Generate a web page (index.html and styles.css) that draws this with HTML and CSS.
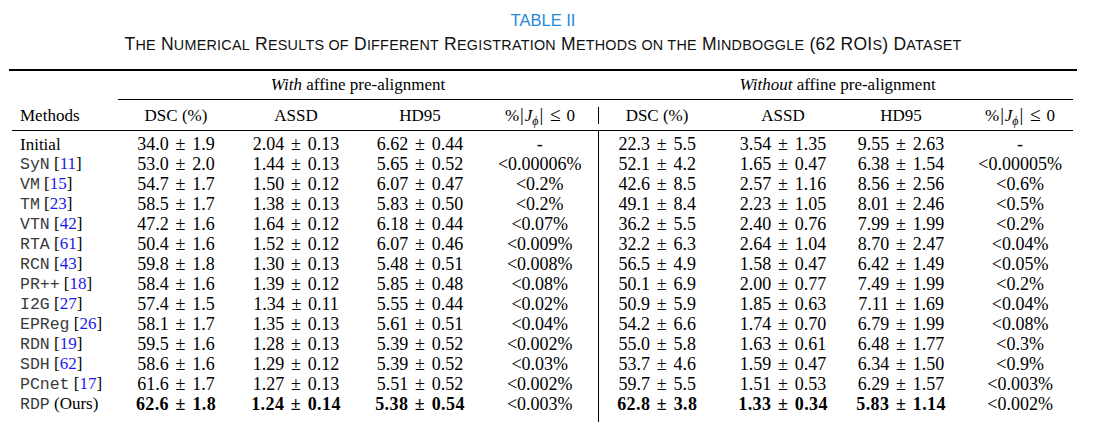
FILE: index.html
```html
<!DOCTYPE html>
<html lang="en">
<head>
<meta charset="utf-8">
<title>Table II</title>
<link rel="stylesheet" href="styles.css">
</head>
<body>
<div class="page">
  <div class="caption">
    <div class="tno">TABLE II</div>
    <div class="ttl">T<span class="sc">he</span> N<span class="sc">umerical</span> R<span class="sc">esults of</span> D<span class="sc">ifferent</span> R<span class="sc">egistration</span> M<span class="sc">ethods on the</span> M<span class="sc">indboggle</span> (62 ROI<span class="sc">s</span>) D<span class="sc">ataset</span></div>
  </div>
  <div class="rule-top"></div>
  <table class="res">
    <colgroup>
      <col class="c-m"><col class="c-dsc"><col class="c-assd"><col class="c-hd"><col class="c-j">
      <col class="c-dsc2"><col class="c-assd2"><col class="c-hd2"><col class="c-j2">
    </colgroup>
    <thead>
      <tr class="grp"><th></th><th colspan="4"><i>With</i> affine pre-alignment</th><th colspan="4"><i>Without</i> affine pre-alignment</th></tr>
      <tr class="rulerow"><td></td><td colspan="8"><div class="cmid"></div></td></tr>
      <tr class="hdr">
        <th class="m">Methods</th><th>DSC (%)</th><th>ASSD</th><th>HD95</th>
        <th>%<span class="bar">|</span><i>J</i><sub>ϕ</sub><span class="bar">|</span><span class="le">≤</span>0</th>
        <th class="sep">DSC (%)</th><th>ASSD</th><th>HD95</th>
        <th>%<span class="bar">|</span><i>J</i><sub>ϕ</sub><span class="bar">|</span><span class="le">≤</span>0</th>
      </tr>
      <tr class="rulerow"><td colspan="9"><div class="mid"></div></td></tr>
    </thead>
    <tbody>
      <tr class="spacer"><td colspan="5"></td><td class="sep"></td><td colspan="3"></td></tr>
      <tr><td class="m">Initial</td><td>34.0<span class="pm">±</span>1.9</td><td>2.04<span class="pm">±</span>0.13</td><td>6.62<span class="pm">±</span>0.44</td><td>-</td><td class="sep">22.3<span class="pm">±</span>5.5</td><td>3.54<span class="pm">±</span>1.35</td><td>9.55<span class="pm">±</span>2.63</td><td>-</td></tr>
      <tr><td class="m"><span class="tt">SyN</span> [<span class="ref">11</span>]</td><td>53.0<span class="pm">±</span>2.0</td><td>1.44<span class="pm">±</span>0.13</td><td>5.65<span class="pm">±</span>0.52</td><td>&lt;0.00006%</td><td class="sep">52.1<span class="pm">±</span>4.2</td><td>1.65<span class="pm">±</span>0.47</td><td>6.38<span class="pm">±</span>1.54</td><td>&lt;0.00005%</td></tr>
      <tr><td class="m"><span class="tt">VM</span> [<span class="ref">15</span>]</td><td>54.7<span class="pm">±</span>1.7</td><td>1.50<span class="pm">±</span>0.12</td><td>6.07<span class="pm">±</span>0.47</td><td>&lt;0.2%</td><td class="sep">42.6<span class="pm">±</span>8.5</td><td>2.57<span class="pm">±</span>1.16</td><td>8.56<span class="pm">±</span>2.56</td><td>&lt;0.6%</td></tr>
      <tr><td class="m"><span class="tt">TM</span> [<span class="ref">23</span>]</td><td>58.5<span class="pm">±</span>1.7</td><td>1.38<span class="pm">±</span>0.13</td><td>5.83<span class="pm">±</span>0.50</td><td>&lt;0.2%</td><td class="sep">49.1<span class="pm">±</span>8.4</td><td>2.23<span class="pm">±</span>1.05</td><td>8.01<span class="pm">±</span>2.46</td><td>&lt;0.5%</td></tr>
      <tr><td class="m"><span class="tt">VTN</span> [<span class="ref">42</span>]</td><td>47.2<span class="pm">±</span>1.6</td><td>1.64<span class="pm">±</span>0.12</td><td>6.18<span class="pm">±</span>0.44</td><td>&lt;0.07%</td><td class="sep">36.2<span class="pm">±</span>5.5</td><td>2.40<span class="pm">±</span>0.76</td><td>7.99<span class="pm">±</span>1.99</td><td>&lt;0.2%</td></tr>
      <tr><td class="m"><span class="tt">RTA</span> [<span class="ref">61</span>]</td><td>50.4<span class="pm">±</span>1.6</td><td>1.52<span class="pm">±</span>0.12</td><td>6.07<span class="pm">±</span>0.46</td><td>&lt;0.009%</td><td class="sep">32.2<span class="pm">±</span>6.3</td><td>2.64<span class="pm">±</span>1.04</td><td>8.70<span class="pm">±</span>2.47</td><td>&lt;0.04%</td></tr>
      <tr><td class="m"><span class="tt">RCN</span> [<span class="ref">43</span>]</td><td>59.8<span class="pm">±</span>1.8</td><td>1.30<span class="pm">±</span>0.13</td><td>5.48<span class="pm">±</span>0.51</td><td>&lt;0.008%</td><td class="sep">56.5<span class="pm">±</span>4.9</td><td>1.58<span class="pm">±</span>0.47</td><td>6.42<span class="pm">±</span>1.49</td><td>&lt;0.05%</td></tr>
      <tr><td class="m"><span class="tt">PR++</span> [<span class="ref">18</span>]</td><td>58.4<span class="pm">±</span>1.6</td><td>1.39<span class="pm">±</span>0.12</td><td>5.85<span class="pm">±</span>0.48</td><td>&lt;0.08%</td><td class="sep">50.1<span class="pm">±</span>6.9</td><td>2.00<span class="pm">±</span>0.77</td><td>7.49<span class="pm">±</span>1.99</td><td>&lt;0.2%</td></tr>
      <tr><td class="m"><span class="tt">I2G</span> [<span class="ref">27</span>]</td><td>57.4<span class="pm">±</span>1.5</td><td>1.34<span class="pm">±</span>0.11</td><td>5.55<span class="pm">±</span>0.44</td><td>&lt;0.02%</td><td class="sep">50.9<span class="pm">±</span>5.9</td><td>1.85<span class="pm">±</span>0.63</td><td>7.11<span class="pm">±</span>1.69</td><td>&lt;0.04%</td></tr>
      <tr><td class="m"><span class="tt">EPReg</span> [<span class="ref">26</span>]</td><td>58.1<span class="pm">±</span>1.7</td><td>1.35<span class="pm">±</span>0.13</td><td>5.61<span class="pm">±</span>0.51</td><td>&lt;0.04%</td><td class="sep">54.2<span class="pm">±</span>6.6</td><td>1.74<span class="pm">±</span>0.70</td><td>6.79<span class="pm">±</span>1.99</td><td>&lt;0.08%</td></tr>
      <tr><td class="m"><span class="tt">RDN</span> [<span class="ref">19</span>]</td><td>59.5<span class="pm">±</span>1.6</td><td>1.28<span class="pm">±</span>0.13</td><td>5.39<span class="pm">±</span>0.52</td><td>&lt;0.002%</td><td class="sep">55.0<span class="pm">±</span>5.8</td><td>1.63<span class="pm">±</span>0.61</td><td>6.48<span class="pm">±</span>1.77</td><td>&lt;0.3%</td></tr>
      <tr><td class="m"><span class="tt">SDH</span> [<span class="ref">62</span>]</td><td>58.6<span class="pm">±</span>1.6</td><td>1.29<span class="pm">±</span>0.12</td><td>5.39<span class="pm">±</span>0.52</td><td>&lt;0.03%</td><td class="sep">53.7<span class="pm">±</span>4.6</td><td>1.59<span class="pm">±</span>0.47</td><td>6.34<span class="pm">±</span>1.50</td><td>&lt;0.9%</td></tr>
      <tr><td class="m"><span class="tt">PCnet</span> [<span class="ref">17</span>]</td><td>61.6<span class="pm">±</span>1.7</td><td>1.27<span class="pm">±</span>0.13</td><td>5.51<span class="pm">±</span>0.52</td><td>&lt;0.002%</td><td class="sep">59.7<span class="pm">±</span>5.5</td><td>1.51<span class="pm">±</span>0.53</td><td>6.29<span class="pm">±</span>1.57</td><td>&lt;0.003%</td></tr>
      <tr><td class="m"><span class="tt">RDP</span> (Ours)</td><td class="b">62.6<span class="pm">±</span>1.8</td><td class="b">1.24<span class="pm">±</span>0.14</td><td class="b">5.38<span class="pm">±</span>0.54</td><td>&lt;0.003%</td><td class="sep b">62.8<span class="pm">±</span>3.8</td><td class="b">1.33<span class="pm">±</span>0.34</td><td class="b">5.83<span class="pm">±</span>1.14</td><td>&lt;0.002%</td></tr>
      <tr class="spacer-b"><td colspan="5"></td><td class="sep"></td><td colspan="3"></td></tr>
    </tbody>
  </table>
  <div class="rule-bottom"></div>
</div>
</body>
</html>
```

FILE: styles.css
```css
body {
  margin: 0;
  background: #ffffff;
  color: #000000;
  font-family: "Liberation Serif", "Times New Roman", serif;
  font-size: 17px;
}

.page {
  width: 1101px;
}

.caption {
  width: 1068px;
  margin-left: 9px;
  text-align: center;
  font-family: "Liberation Sans", Arial, sans-serif;
}

.tno {
  color: #1f8ad8;
  font-size: 16.5px;
  line-height: 18px;
  padding-top: 11px;
}

.ttl {
  color: #111111;
  font-size: 17.5px;
  line-height: 18px;
  margin-top: 6px;
  letter-spacing: 0.25px;
}

.sc {
  font-size: 0.82em;
  text-transform: uppercase;
}

.rule-top,
.rule-bottom {
  width: 1068px;
  height: 2px;
  margin-left: 9px;
  background: #000000;
}

.rule-top {
  margin-top: 15px;
}

.res {
  margin-left: 9px;
  width: 1068px;
  border-collapse: collapse;
  table-layout: fixed;
}

.c-m { width: 109px; }
.c-dsc { width: 116px; }
.c-assd { width: 124px; }
.c-hd { width: 124px; }
.c-j { width: 116px; }
.c-dsc2 { width: 118px; }
.c-assd2 { width: 134px; }
.c-hd2 { width: 108px; }
.c-j2 { width: 119px; }

.res th,
.res td {
  padding: 0;
  text-align: center;
  font-weight: normal;
  white-space: nowrap;
}

.grp th {
  height: 28px;
  line-height: 28px;
}

.rulerow td {
  height: 1px;
  line-height: 0;
  font-size: 0;
}

.cmid {
  height: 1px;
  background: #000000;
  margin-right: 4px;
}

.mid {
  height: 1px;
  background: #000000;
  margin: 0 4px 0 3px;
}

.hdr th {
  height: 29px;
  line-height: 29px;
}

.hdr th.sep {
  background: linear-gradient(#000000, #000000) left center / 1px 17px no-repeat;
}

.res .m {
  text-align: left;
  padding-left: 11px;
}

.res tr > :nth-child(8) {
  padding-right: 6px;
}

.res tr > :nth-child(9) {
  padding-left: 5px;
}

.bar {
  font-size: 1.1em;
  margin: 0 0.05em;
}

sub {
  font-size: 0.7em;
  font-style: italic;
  vertical-align: -0.3em;
  line-height: 0;
}

.le {
  font-size: 1.15em;
  margin: 0 0.3em;
}

tbody td {
  height: 19px;
  line-height: 19px;
  font-size: 18px;
}

tbody td.m {
  font-size: 17px;
}

tbody .spacer td {
  height: 4px;
  line-height: 0;
}

tbody .spacer-b td {
  height: 8px;
  line-height: 0;
}

tbody td.sep {
  border-left: 1px solid #000000;
}

.pm {
  display: inline-block;
  width: 1.3em;
  text-align: center;
}

.res td.b {
  font-weight: bold;
  letter-spacing: 0.4px;
}

.tt {
  font-family: "Liberation Mono", "Courier New", monospace;
  font-size: 16.5px;
  color: #3a3a3a;
}

.ref {
  color: #1a1aee;
}
```
